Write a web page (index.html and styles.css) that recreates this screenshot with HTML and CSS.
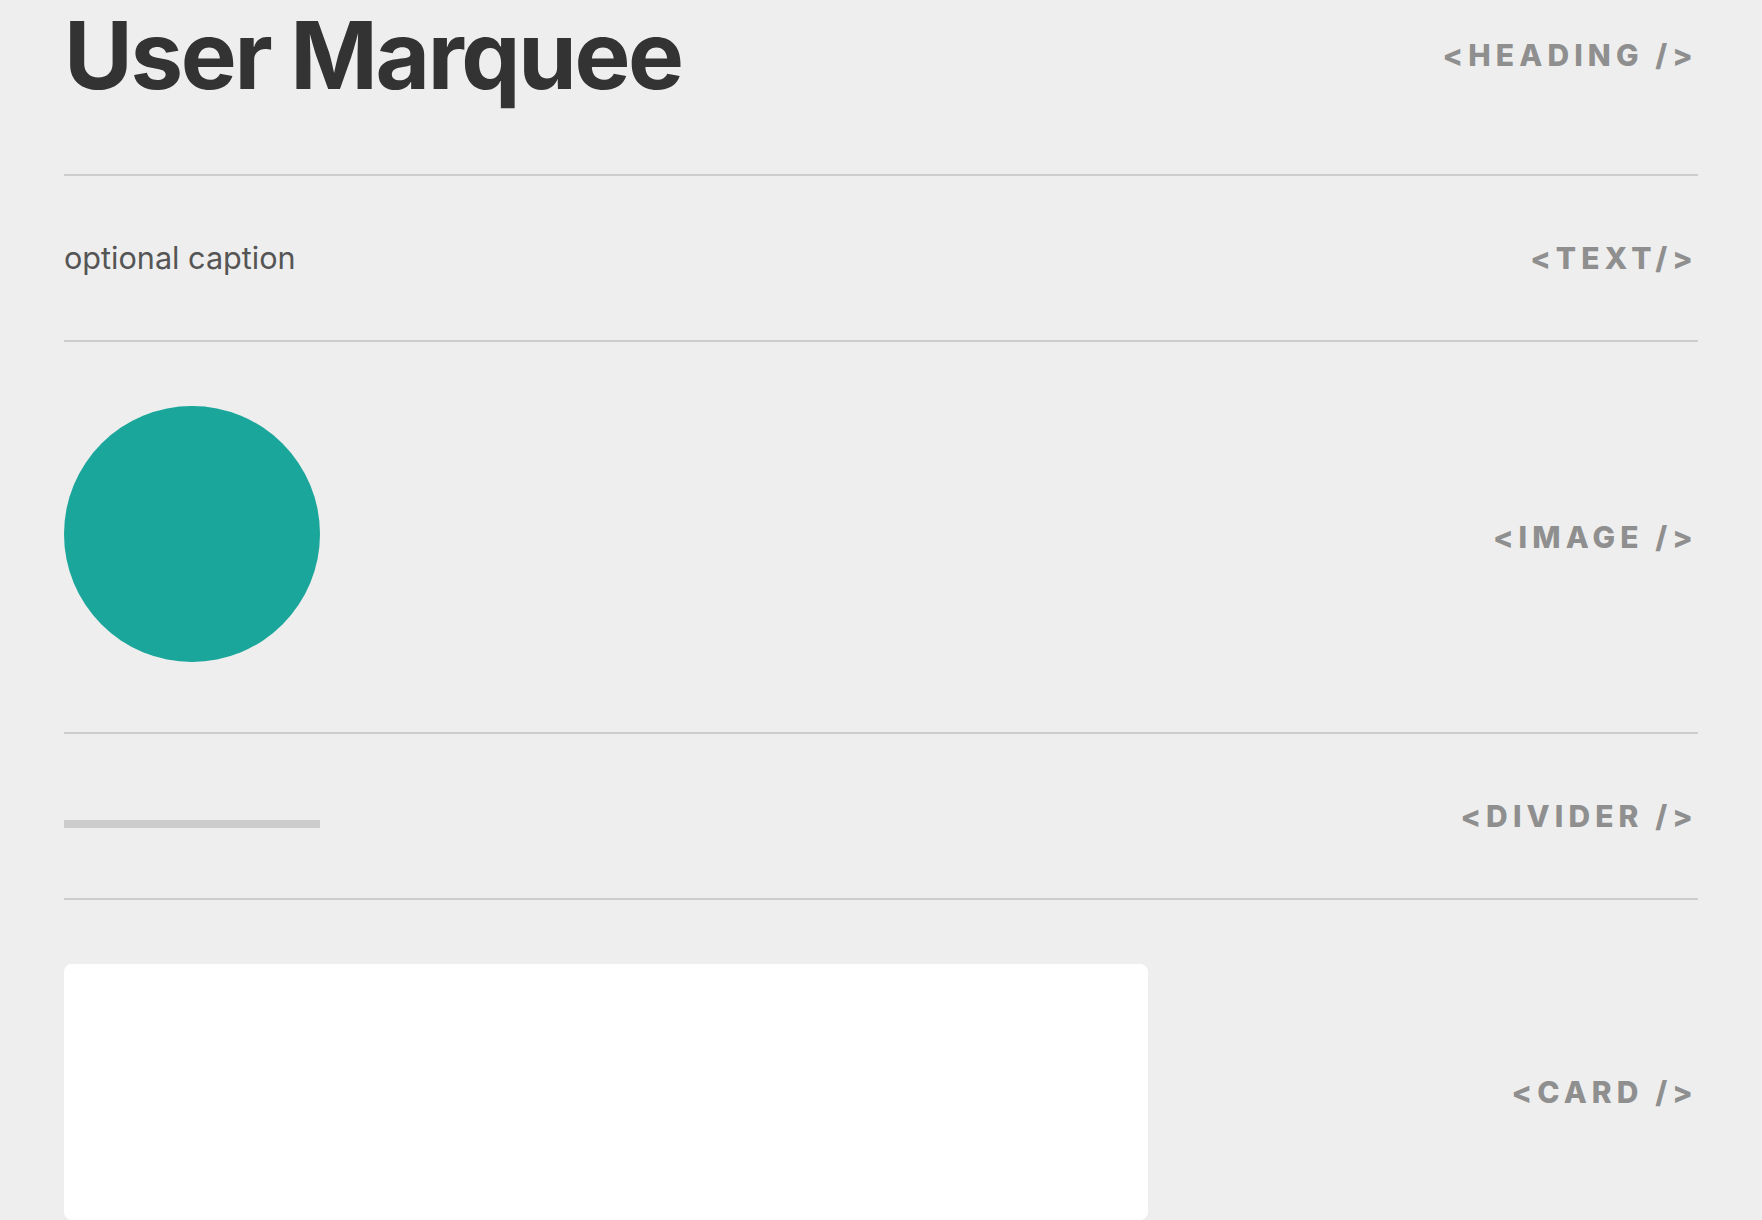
FILE: index.html
```html
<!DOCTYPE html>
<html lang="en">
<head>
<meta charset="utf-8">
<title>User Marquee</title>
<link rel="stylesheet" href="styles.css">
</head>
<body>
<main class="page">
  <section class="row row-heading">
    <h1 class="title">User Marquee</h1>
    <span class="tag">&lt;HEADING /&gt;</span>
  </section>
  <section class="row">
    <p class="caption">optional caption</p>
    <span class="tag">&lt;TEXT/&gt;</span>
  </section>
  <section class="row">
    <div class="avatar"></div>
    <span class="tag">&lt;IMAGE /&gt;</span>
  </section>
  <section class="row">
    <div class="divider-wrap"><div class="divider"></div></div>
    <span class="tag">&lt;DIVIDER /&gt;</span>
  </section>
  <section class="row">
    <div class="card"></div>
    <span class="tag">&lt;CARD /&gt;</span>
  </section>
</main>
</body>
</html>
```
FILE: styles.css
```css
html, body {
  margin: 0;
  padding: 0;
  background: #eeeeee;
}

body {
  font-family: Inter, "Liberation Sans", sans-serif;
}

.page {
  padding: 0 64px;
}

.row {
  display: flex;
  align-items: center;
  justify-content: space-between;
  padding: 64px 0;
  border-bottom: 2px solid #cccccc;
}

.row-heading {
  padding-top: 0;
}

.title {
  margin: 0;
  font-size: 94px;
  line-height: 110px;
  font-weight: 700;
  letter-spacing: -0.025em;
  color: #333333;
}

.caption {
  margin: 0;
  font-size: 30.6px;
  line-height: 36px;
  font-weight: 400;
  color: #555555;
}

.tag {
  font-size: 30px;
  font-weight: 800;
  letter-spacing: 0.17em;
  color: #8f8f8f;
  white-space: nowrap;
}

.avatar {
  width: 256px;
  height: 256px;
  border-radius: 50%;
  background: #1aa69a;
  margin-bottom: 6px;
}

.divider-wrap {
  height: 36px;
}

.divider {
  width: 256px;
  height: 8px;
  margin-top: 22px;
  background: #cccccc;
}

.card {
  width: 1084px;
  height: 256px;
  border-radius: 8px;
  background: #ffffff;
}
```
